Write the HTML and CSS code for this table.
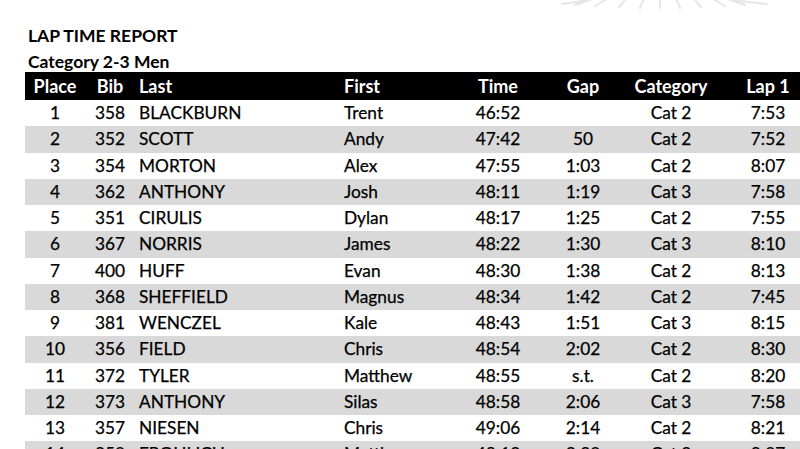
FILE: index.html
```html
<!DOCTYPE html>
<html>
<head>
<meta charset="utf-8">
<link rel="stylesheet" href="styles.css">
</head>
<body>
<div class="logo">
<svg width="300" height="20" viewBox="0 0 300 20">
<g stroke="#e6e6e6" stroke-width="2" stroke-linecap="round">
<line x1="143" y1="-4" x2="143" y2="8"/>
<line x1="128" y1="-4" x2="123" y2="8"/>
<line x1="158" y1="-4" x2="163" y2="8"/>
<line x1="113" y1="-6" x2="102" y2="7"/>
<line x1="173" y1="-6" x2="184" y2="7"/>
<line x1="98" y1="-6" x2="78" y2="6"/>
<line x1="188" y1="-6" x2="208" y2="6"/>
<line x1="84" y1="-4" x2="58" y2="5"/>
<line x1="202" y1="-4" x2="228" y2="5"/>
<line x1="72" y1="0" x2="45" y2="4"/>
<line x1="214" y1="0" x2="250" y2="4"/>
</g>
</svg>
</div>
<div class="page">
<h1 class="title">LAP TIME REPORT</h1>
<h2 class="subtitle">Category 2-3 Men</h2>
<table class="results">
<thead>
<tr><th class="c-place">Place</th><th class="c-bib">Bib</th><th class="c-last">Last</th><th class="c-first">First</th><th class="c-time">Time</th><th class="c-gap">Gap</th><th class="c-cat">Category</th><th class="c-lap">Lap 1</th></tr>
</thead>
<tbody>
<tr><td class="c-place">1</td><td class="c-bib">358</td><td class="c-last">BLACKBURN</td><td class="c-first">Trent</td><td class="c-time">46:52</td><td class="c-gap"></td><td class="c-cat">Cat 2</td><td class="c-lap">7:53</td></tr>
<tr><td class="c-place">2</td><td class="c-bib">352</td><td class="c-last">SCOTT</td><td class="c-first">Andy</td><td class="c-time">47:42</td><td class="c-gap">50</td><td class="c-cat">Cat 2</td><td class="c-lap">7:52</td></tr>
<tr><td class="c-place">3</td><td class="c-bib">354</td><td class="c-last">MORTON</td><td class="c-first">Alex</td><td class="c-time">47:55</td><td class="c-gap">1:03</td><td class="c-cat">Cat 2</td><td class="c-lap">8:07</td></tr>
<tr><td class="c-place">4</td><td class="c-bib">362</td><td class="c-last">ANTHONY</td><td class="c-first">Josh</td><td class="c-time">48:11</td><td class="c-gap">1:19</td><td class="c-cat">Cat 3</td><td class="c-lap">7:58</td></tr>
<tr><td class="c-place">5</td><td class="c-bib">351</td><td class="c-last">CIRULIS</td><td class="c-first">Dylan</td><td class="c-time">48:17</td><td class="c-gap">1:25</td><td class="c-cat">Cat 2</td><td class="c-lap">7:55</td></tr>
<tr><td class="c-place">6</td><td class="c-bib">367</td><td class="c-last">NORRIS</td><td class="c-first">James</td><td class="c-time">48:22</td><td class="c-gap">1:30</td><td class="c-cat">Cat 3</td><td class="c-lap">8:10</td></tr>
<tr><td class="c-place">7</td><td class="c-bib">400</td><td class="c-last">HUFF</td><td class="c-first">Evan</td><td class="c-time">48:30</td><td class="c-gap">1:38</td><td class="c-cat">Cat 2</td><td class="c-lap">8:13</td></tr>
<tr><td class="c-place">8</td><td class="c-bib">368</td><td class="c-last">SHEFFIELD</td><td class="c-first">Magnus</td><td class="c-time">48:34</td><td class="c-gap">1:42</td><td class="c-cat">Cat 2</td><td class="c-lap">7:45</td></tr>
<tr><td class="c-place">9</td><td class="c-bib">381</td><td class="c-last">WENCZEL</td><td class="c-first">Kale</td><td class="c-time">48:43</td><td class="c-gap">1:51</td><td class="c-cat">Cat 3</td><td class="c-lap">8:15</td></tr>
<tr><td class="c-place">10</td><td class="c-bib">356</td><td class="c-last">FIELD</td><td class="c-first">Chris</td><td class="c-time">48:54</td><td class="c-gap">2:02</td><td class="c-cat">Cat 2</td><td class="c-lap">8:30</td></tr>
<tr><td class="c-place">11</td><td class="c-bib">372</td><td class="c-last">TYLER</td><td class="c-first">Matthew</td><td class="c-time">48:55</td><td class="c-gap">s.t.</td><td class="c-cat">Cat 2</td><td class="c-lap">8:20</td></tr>
<tr><td class="c-place">12</td><td class="c-bib">373</td><td class="c-last">ANTHONY</td><td class="c-first">Silas</td><td class="c-time">48:58</td><td class="c-gap">2:06</td><td class="c-cat">Cat 3</td><td class="c-lap">7:58</td></tr>
<tr><td class="c-place">13</td><td class="c-bib">357</td><td class="c-last">NIESEN</td><td class="c-first">Chris</td><td class="c-time">49:06</td><td class="c-gap">2:14</td><td class="c-cat">Cat 2</td><td class="c-lap">8:21</td></tr>
<tr><td class="c-place">14</td><td class="c-bib">350</td><td class="c-last">FROHLICH</td><td class="c-first">Matthew</td><td class="c-time">49:12</td><td class="c-gap">2:20</td><td class="c-cat">Cat 2</td><td class="c-lap">8:07</td></tr>
</tbody>
</table>
</div>
</body>
</html>
```
FILE: styles.css
```css
html, body {
  margin: 0;
  padding: 0;
  overflow: hidden;
  background: #ffffff;
}
body {
  width: 800px;
  height: 449px;
  position: relative;
  font-family: "Lato", "Noto Sans", sans-serif;
  color: #000000;
}
.logo {
  position: absolute;
  left: 517px;
  top: 0;
  width: 300px;
  height: 20px;
}
.logo svg { display: block; }
.page {
  padding: 24px 0 0 25px;
}
.title {
  margin: 0;
  font-size: 17.5px;
  font-weight: 700;
  line-height: 24px;
  padding-left: 3px;
}
.subtitle {
  margin: 0;
  font-size: 17.5px;
  font-weight: 700;
  line-height: 21px;
  padding: 3px 0 0 3px;
}
.results {
  border-collapse: collapse;
  table-layout: fixed;
  width: 779px;
}
.results th,
.results td {
  box-sizing: border-box;
  padding: 0;
  white-space: nowrap;
}
.results th {
  background: #000000;
  color: #ffffff;
  font-size: 18px;
  font-weight: 700;
  height: 28px;
  line-height: 27px;
}
.results td {
  font-size: 17.3px;
  height: 26.25px;
  line-height: 26px;
  -webkit-text-stroke: 0.25px #000000;
}
.results tbody tr:nth-child(even) td {
  background: #d9d9d9;
}
.c-place { width: 60px; text-align: center; }
.c-bib { width: 50px; text-align: center; }
.c-last { width: 205px; text-align: left; padding-left: 4px !important; }
.c-first { width: 100px; text-align: left; padding-left: 4px !important; }
.c-time { width: 116px; text-align: center; }
.c-gap { width: 54px; text-align: center; }
.c-cat { width: 122px; text-align: center; }
.c-lap { width: 72px; text-align: center; }
```
